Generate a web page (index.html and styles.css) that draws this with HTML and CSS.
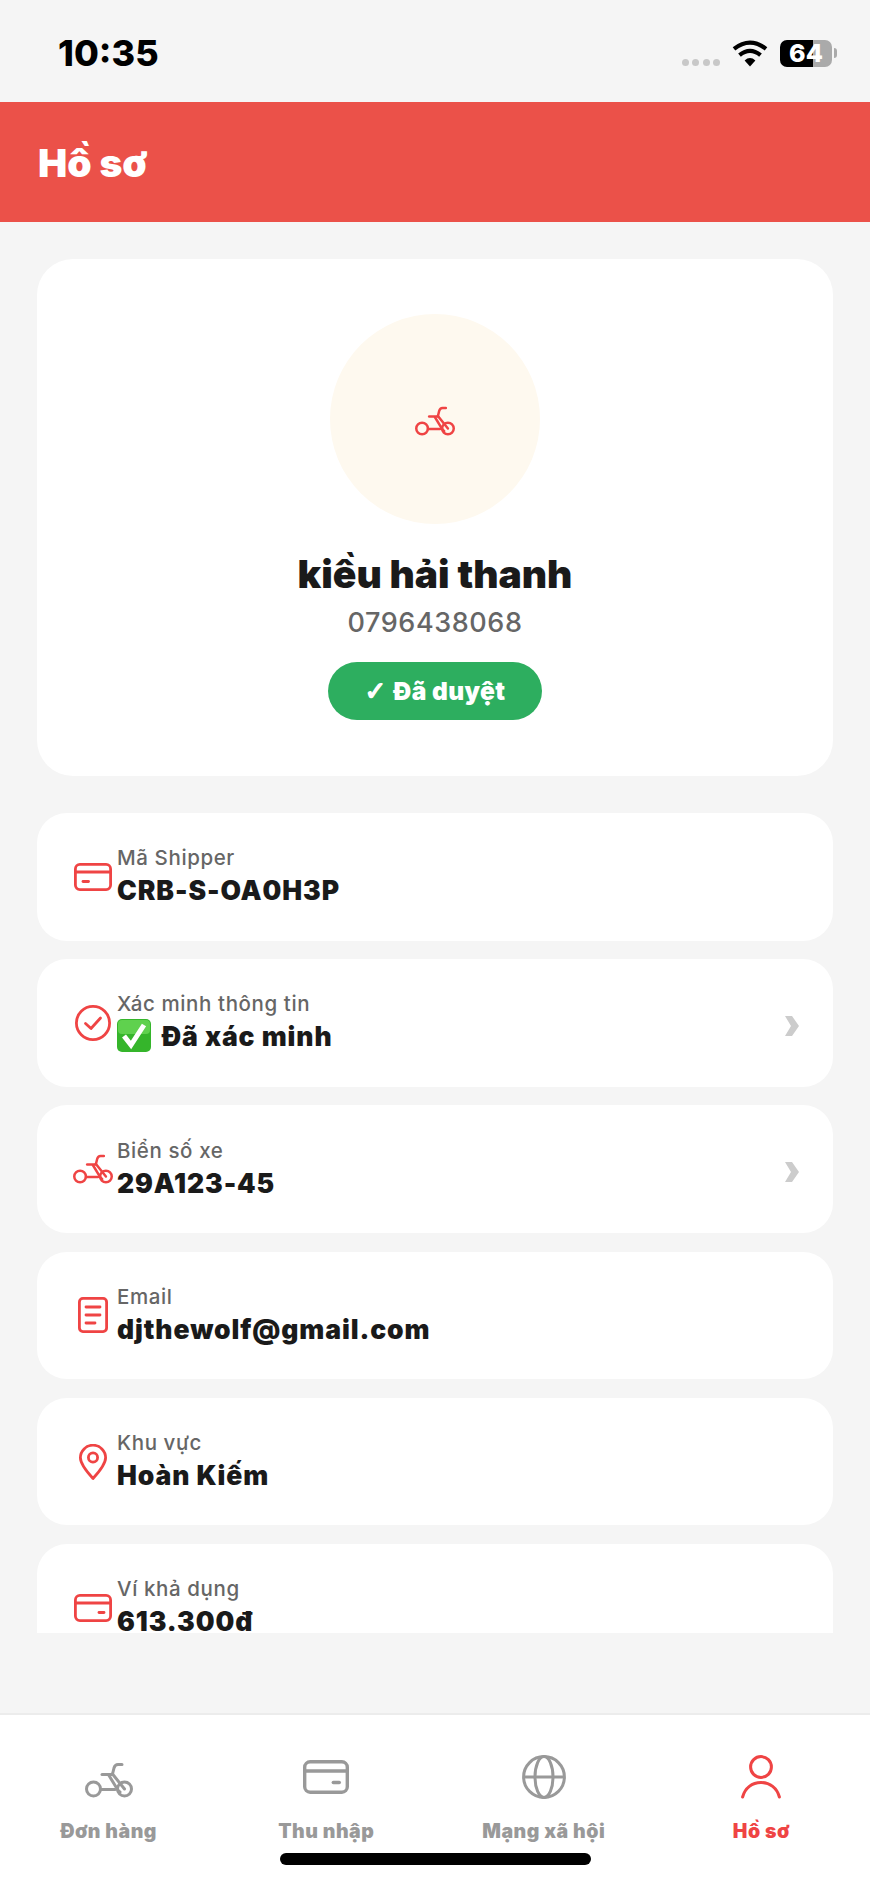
FILE: index.html
```html
<!DOCTYPE html>
<html lang="vi">
<head>
    <meta charset="UTF-8">
    <meta name="viewport" content="width=device-width, initial-scale=1.0">
    <title>Hồ sơ</title>
    <link rel="stylesheet" href="styles.css">
</head>
<body>
    <svg class="defs" width="0" height="0">
        <symbol id="bike" viewBox="0 0 48 36">
            <g fill="none" stroke="currentColor" stroke-width="3" stroke-linecap="round" stroke-linejoin="round">
                <circle cx="8.5" cy="27" r="7"/>
                <circle cx="39.5" cy="27" r="7"/>
                <path d="M37 2.5H33Q30 2.5 29 6L27.5 12"/>
                <path d="M17 12.5H27.5"/>
                <path d="M27.5 12L39.5 27"/>
                <path d="M24 13.5L31 25Q32.5 28.5 35 30"/>
                <path d="M15.5 27.5H30"/>
            </g>
        </symbol>
        <symbol id="card" viewBox="0 0 38 28">
            <g fill="none" stroke="currentColor" stroke-width="2.8" stroke-linecap="round">
                <rect x="1.4" y="1.4" width="35.2" height="25.2" rx="4.5"/>
                <path d="M1.4 9H36.6"/>
                <path d="M9 18.5H14.5"/>
            </g>
        </symbol>
        <symbol id="wallet" viewBox="0 0 38 28">
            <g fill="none" stroke="currentColor" stroke-width="2.8" stroke-linecap="round">
                <rect x="1.4" y="1.4" width="35.2" height="25.2" rx="4.5"/>
                <path d="M1.4 9H36.6"/>
                <path d="M25 18.5H30"/>
            </g>
        </symbol>
    </svg>

    <!-- Status bar -->
    <div class="status-bar">
        <span class="clock">10:35</span>
        <div class="status-icons">
            <div class="signal"><i></i><i></i><i></i><i></i></div>
            <svg class="wifi" viewBox="0 0 36 27">
                <path d="M18 26.5L12.6 20.4Q18 15.8 23.4 20.4Z" fill="#000"/>
                <path d="M7.5 15.2Q18 6.6 28.5 15.2" fill="none" stroke="#000" stroke-width="4.2"/>
                <path d="M2 8.8Q18 -3.6 34 8.8" fill="none" stroke="#000" stroke-width="4.2"/>
            </svg>
            <div class="battery">64</div>
            <div class="battery-nub"></div>
        </div>
    </div>

    <!-- Header -->
    <div class="header"><h1>Hồ sơ</h1></div>

    <!-- Content -->
    <div class="content">
        <div class="profile-card">
            <div class="avatar">
                <svg class="icon-bike"><use href="#bike"/></svg>
            </div>
            <div class="name">kiều hải thanh</div>
            <div class="phone">0796438068</div>
            <div class="badge"><span class="tick">✓</span> Đã duyệt</div>
        </div>

        <div class="row">
            <svg class="row-icon icon-card"><use href="#card"/></svg>
            <div class="row-text">
                <div class="row-label">Mã Shipper</div>
                <div class="row-value">CRB-S-OA0H3P</div>
            </div>
        </div>

        <div class="row">
            <svg class="row-icon icon-round" viewBox="0 0 36 36" fill="none" stroke="currentColor" stroke-width="2.8" stroke-linecap="round" stroke-linejoin="round">
                <circle cx="18" cy="18" r="16.6"/>
                <path d="M10.5 18.5L16 23.5L25.5 13"/>
            </svg>
            <div class="row-text">
                <div class="row-label">Xác minh thông tin</div>
                <div class="row-value with-emoji">
                    <svg class="emoji" viewBox="0 0 34 34">
                        <rect width="34" height="33" rx="5" fill="#35B52B"/>
                        <rect x="1" y="1" width="32" height="14" rx="4" fill="#5FD14E"/>
                        <path d="M7 17L14 26L27 6" fill="none" stroke="#fff" stroke-width="5"/>
                    </svg>
                    Đã xác minh
                </div>
            </div>
            <svg class="chevron" viewBox="0 0 16 20"><path d="M1 0H8L15 10L8 20H1L7 10Z" fill="#ccc"/></svg>
        </div>

        <div class="row">
            <svg class="row-icon icon-bike"><use href="#bike"/></svg>
            <div class="row-text">
                <div class="row-label">Biển số xe</div>
                <div class="row-value">29A123-45</div>
            </div>
            <svg class="chevron" viewBox="0 0 16 20"><path d="M1 0H8L15 10L8 20H1L7 10Z" fill="#ccc"/></svg>
        </div>

        <div class="row">
            <svg class="row-icon icon-doc" viewBox="0 0 30 36" fill="none" stroke="currentColor" stroke-width="2.8" stroke-linecap="round">
                <rect x="1.4" y="1.4" width="27.2" height="33.2" rx="3.5"/>
                <path d="M8 10H22M8 18H22M8 26H17"/>
            </svg>
            <div class="row-text">
                <div class="row-label">Email</div>
                <div class="row-value">djthewolf@gmail.com</div>
            </div>
        </div>

        <div class="row">
            <svg class="row-icon icon-pin" viewBox="0 0 28 36" fill="none" stroke="currentColor" stroke-width="2.8" stroke-linejoin="round">
                <path d="M14 34.5C8 28 1.4 20.5 1.4 13.8A12.6 12.6 0 0 1 26.6 13.8C26.6 20.5 20 28 14 34.5Z"/>
                <circle cx="14" cy="13.5" r="4.6"/>
            </svg>
            <div class="row-text">
                <div class="row-label">Khu vực</div>
                <div class="row-value">Hoàn Kiếm</div>
            </div>
        </div>

        <div class="row">
            <svg class="row-icon icon-card"><use href="#wallet"/></svg>
            <div class="row-text">
                <div class="row-label">Ví khả dụng</div>
                <div class="row-value">613.300đ</div>
            </div>
        </div>
    </div>

    <!-- Tab bar -->
    <div class="tab-bar">
        <div class="tab">
            <div class="tab-icon"><svg class="tab-bike"><use href="#bike"/></svg></div>
            <span>Đơn hàng</span>
        </div>
        <div class="tab">
            <div class="tab-icon"><svg class="tab-wallet"><use href="#wallet"/></svg></div>
            <span>Thu nhập</span>
        </div>
        <div class="tab">
            <div class="tab-icon">
                <svg class="tab-globe" viewBox="0 0 44 44" fill="none" stroke="currentColor" stroke-width="3">
                    <circle cx="22" cy="22" r="20.4"/>
                    <ellipse cx="22" cy="22" rx="9" ry="20.4"/>
                    <path d="M1.6 22H42.4"/>
                </svg>
            </div>
            <span>Mạng xã hội</span>
        </div>
        <div class="tab active">
            <div class="tab-icon">
                <svg class="tab-person" viewBox="0 0 40 44" fill="none" stroke="currentColor" stroke-width="3" stroke-linecap="round">
                    <circle cx="20" cy="12" r="10.4"/>
                    <path d="M1.6 42C4 33 11 27.5 20 27.5S36 33 38.4 42"/>
                </svg>
            </div>
            <span>Hồ sơ</span>
        </div>
        <div class="home-indicator"></div>
    </div>
</body>
</html>
```

FILE: styles.css
```css
* { margin: 0; padding: 0; box-sizing: border-box; }
html, body { height: 100%; }
body { display: flex; flex-direction: column; height: 1884px; overflow: hidden; font-family: Inter, "Noto Sans", sans-serif; background: #f5f5f5; color: #1a1a1a; }
.defs { position: absolute; }

/* Status bar */
.status-bar { flex: 0 0 102px; display: flex; align-items: center; justify-content: space-between; padding: 4px 33px 0 58px; }
.clock { font-size: 36px; font-weight: 800; color: #000; }
.status-icons { display: flex; align-items: center; }
.signal { display: flex; gap: 3.5px; margin-top: 19px; margin-right: 12px; }
.signal i { width: 7px; height: 7px; border-radius: 50%; background: #c8c8c8; }
.wifi { width: 36px; height: 27px; margin-right: 12px; }
.battery { width: 52px; height: 27px; border-radius: 7px; background: linear-gradient(to right, #000 33px, #aaa 33px); font-size: 25px; line-height: 27px; font-weight: 800; color: #fff; text-align: center; }
.battery-nub { width: 3px; height: 10px; margin-left: 2px; border-radius: 0 3px 3px 0; background: #aaa; }

/* Header */
.header { flex: 0 0 120px; display: flex; align-items: center; padding: 0 38px; background: #eb5149; }
.header h1 { font-size: 39px; font-weight: 900; color: #fff; }

/* Content */
.content { flex: 1; margin-bottom: 80px; padding: 37px 37px 0; overflow: hidden; }

.profile-card { display: flex; flex-direction: column; align-items: center; height: 517px; padding-top: 55px; margin-bottom: 37px; background: #fff; border-radius: 36px; }
.avatar { display: flex; align-items: center; justify-content: center; width: 210px; height: 210px; border-radius: 50%; background: #fef9ef; }
.avatar .icon-bike { margin-top: 4px; }
.icon-bike { width: 40px; height: 30px; color: #ef4444; }
.name { margin-top: 27px; font-size: 39px; line-height: 46px; font-weight: 900; }
.phone { margin-top: 8px; font-size: 27px; line-height: 36px; font-weight: 500; color: #666; letter-spacing: 0.6px; }
.badge { display: flex; align-items: center; justify-content: center; gap: 7px; width: 214px; height: 58px; margin-top: 21px; border-radius: 29px; background: #2dae5f; color: #fff; font-size: 24.5px; font-weight: 900; letter-spacing: 0.4px; }
.tick { font-family: "DejaVu Sans", sans-serif; font-size: 26px; -webkit-text-stroke: 1.4px #fff; }

/* Rows */
.row { display: flex; align-items: center; height: 127.5px; margin-bottom: 18.7px; padding: 0 33px 0 36px; background: #fff; border-radius: 30px; }
.row-icon { flex: none; margin-right: 4px; color: #ef4444; }
.icon-card { width: 38px; height: 28px; margin-left: 1px; margin-right: 5px; }
.icon-round { width: 36px; height: 36px; margin-left: 2px; margin-right: 6px; }
.icon-doc { width: 30px; height: 36px; margin-left: 5px; margin-right: 9px; }
.icon-pin { width: 28px; height: 36px; margin-left: 6px; margin-right: 10px; }
.row-text { flex: 1; }
.row-label { font-size: 20.5px; line-height: 27px; font-weight: 500; color: #666; letter-spacing: 0.6px; }
.row-value { font-size: 26.5px; line-height: 38px; font-weight: 900; letter-spacing: 0.9px; }
.with-emoji { display: flex; align-items: center; gap: 11px; }
.emoji { width: 34px; height: 34px; }
.chevron { width: 16px; height: 20px; margin-top: 6px; }

/* Tab bar */
.tab-bar { position: relative; flex: 0 0 171px; display: flex; background: #fff; border-top: 2px solid #ececec; }
.tab { flex: 1; display: flex; flex-direction: column; align-items: center; padding-top: 39px; color: #999; font-size: 19.5px; font-weight: 900; letter-spacing: 0.5px; }
.tab.active { color: #ef4444; }
.tab-icon { display: flex; align-items: center; justify-content: center; height: 46px; margin-bottom: 19px; }
.tab-bike { width: 48px; height: 36px; margin-top: 5px; }
.tab-wallet { width: 46px; height: 34px; }
.tab-globe { width: 44px; height: 44px; }
.tab-person { width: 40px; height: 44px; }
.home-indicator { position: absolute; left: 280px; bottom: 19px; width: 311px; height: 12px; border-radius: 6px; background: #000; }
```
